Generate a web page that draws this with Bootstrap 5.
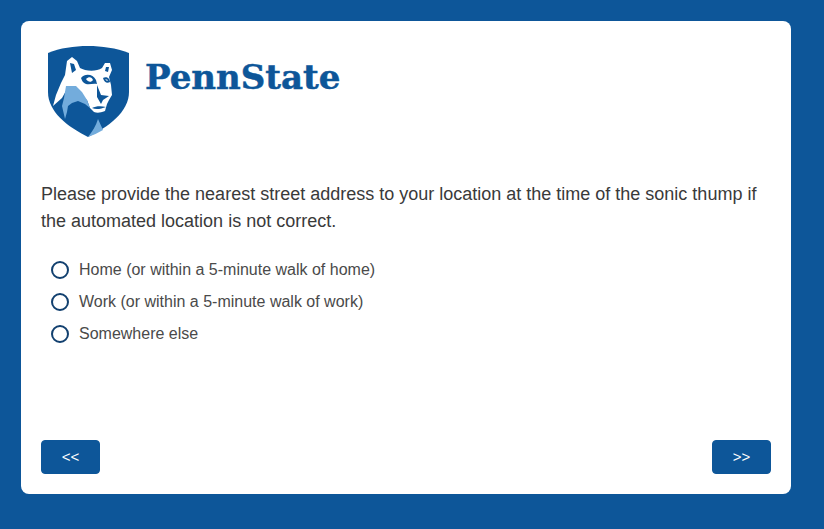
<!DOCTYPE html>
<html lang="en">
<head>
    <meta charset="UTF-8">
    <meta name="viewport" content="width=device-width, initial-scale=1">
    <title>Penn State survey</title>
    <link href="https://cdn.jsdelivr.net/npm/bootstrap@5.3.0/dist/css/bootstrap.min.css" rel="stylesheet">
    <style>
        body {
            background-color: #0d5699;
            font-family: "Liberation Sans", Arial, sans-serif;
            color: #404040;
            padding: 21px 33px 35px 21px;
            height: 529px;
            overflow: hidden;
        }
        .survey-card {
            height: 473px;
            border: 0;
            border-radius: 8px;
            padding: 19px 20px 20px 20px;
        }
        .logo-row {
            height: 105px;
            margin-left: -1px;
        }
        .shield {
            width: 100px;
            height: 105px;
            flex: none;
        }
        .wordmark {
            font-family: "DejaVu Serif", "Liberation Serif", serif;
            font-weight: 700;
            font-size: 34px;
            letter-spacing: 0;
            line-height: 1;
            color: #0d5699;
            -webkit-text-stroke: 0.5px #0d5699;
            margin-left: 5px;
            margin-bottom: 32px;
        }
        .question {
            font-size: 18px;
            line-height: 27px;
            margin-top: 36px;
            margin-bottom: 19px;
            color: #3a3a3a;
        }
        .answer-row {
            height: 32px;
            padding-left: 10px;
            margin: 0;
            font-size: 16px;
        }
        .answer-row .form-check-input {
            width: 18px;
            height: 18px;
            margin: 0 10px 0 0;
            float: none;
            border: 2px solid #12406f;
            flex: none;
        }
        .answer-row .form-check-label {
            color: #4a4a4a;
        }
        .nav-btn {
            width: 59px;
            height: 34px;
            padding: 0;
            font-size: 15px;
            border-radius: 4px;
            background-color: #0d5699;
            border-color: #0d5699;
            color: #fff;
        }
    </style>
</head>
<body>
    <div class="card survey-card d-flex flex-column">
        <div class="logo-row d-flex align-items-center">
            <svg class="shield" viewBox="0 0 100 105" role="img" aria-label="Penn State shield">
                <path fill="#0d5699" d="M8 13 C20 8 34 6 48 6 C62 6 76 8 89 13 L89 52 C89 72 68 87 48 97 C28 87 8 72 8 52 Z"/>
                <path fill="#fff" d="M13 66 L16 55 L21 43 L25 35 L26 28 L27 21 L32 17 L37 21 L40 28 C45 31 56 32 62 28 L65 23 L70 23 L72 30 L69 37 L71 45 L72 55 L69 60 L67 64 L65 71 C60 73 57 73 54 72 L50 68 L47 60 L40 55 L34 48 L27 49 L22 58 Z"/>
                <path fill="#73acdc" d="M26 46 L36 46 L42 52 L47 60 L50 68 L45 64 L38 61 L32 63 L28 66 L27 72 L25 79 L22 66 L24 58 Z"/>
                <path fill="#0d5699" d="M30 23 L34 24 L36 30 L32 33 Z M66 27 L69 27 L68 32 L65 31 Z M41 38 C45 33 53 34 56 40 L57 44 C53 43 50 45 46 44 C43 43 42 41 41 38 Z M63 38 C66 36 70 38 70 42 C67 44 64 42 63 38 Z M57 45 L61 55 L69 56 L63 60 L61 64 L57 57 Z M52 68 C56 66 61 66 66 67 C61 69 56 70 52 68 Z"/>
                <path fill="#fff" d="M46 39 C49 36 52 37 53 40 C51 43 48 42 46 39 Z M65 39 L68 40 L67 41 Z"/>
                <path fill="#73acdc" d="M48 97 C52 92 56 86 58 79 L63 90 C58 93 53 95 48 97 Z"/>
            </svg>
            <span class="wordmark">PennState</span>
        </div>
        <p class="question">Please provide the nearest street address to your location at the time of the sonic thump if the automated location is not correct.</p>
        <div class="form-check answer-row d-flex align-items-center">
            <input class="form-check-input" type="radio" name="place" id="placeHome">
            <label class="form-check-label" for="placeHome">Home (or within a 5-minute walk of home)</label>
        </div>
        <div class="form-check answer-row d-flex align-items-center">
            <input class="form-check-input" type="radio" name="place" id="placeWork">
            <label class="form-check-label" for="placeWork">Work (or within a 5-minute walk of work)</label>
        </div>
        <div class="form-check answer-row d-flex align-items-center">
            <input class="form-check-input" type="radio" name="place" id="placeElse">
            <label class="form-check-label" for="placeElse">Somewhere else</label>
        </div>
        <div class="d-flex justify-content-between mt-auto">
            <button type="button" class="btn btn-primary nav-btn">&lt;&lt;</button>
            <button type="button" class="btn btn-primary nav-btn">&gt;&gt;</button>
        </div>
    </div>
    <script src="https://cdn.jsdelivr.net/npm/bootstrap@5.3.0/dist/js/bootstrap.bundle.min.js"></script>
</body>
</html>
